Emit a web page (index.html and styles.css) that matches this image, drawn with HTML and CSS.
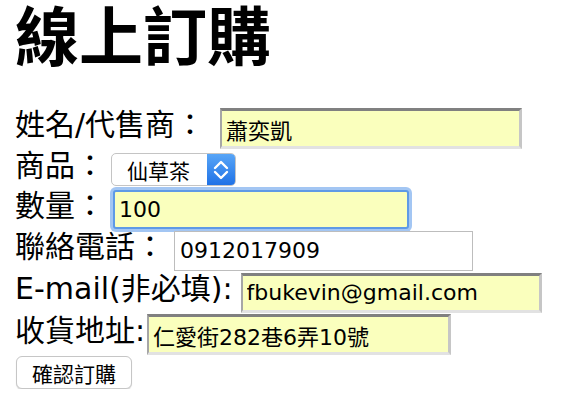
FILE: index.html
```html
<!DOCTYPE html>
<html lang="zh-Hant">
<head>
<meta charset="utf-8">
<title>線上訂購</title>
<link rel="stylesheet" href="styles.css">
</head>
<body>
<main class="page">
  <h1 class="title">線上訂購</h1>
  <form class="order">
    <div class="row row-name">
      <label class="lbl">姓名/代售商：</label>
      <input class="field inset f-name" type="text" value="蕭奕凱">
    </div>
    <div class="row row-product">
      <label class="lbl">商品：</label>
      <span class="select-wrap">
        <select class="select"><option>仙草茶</option></select>
        <span class="arrows">
          <svg width="28" height="33" viewBox="0 0 28 33"><polyline points="8,15 14,9 20,15" fill="none" stroke="#fff" stroke-width="2.4" stroke-linecap="round" stroke-linejoin="round"/><polyline points="8,19 14,25 20,19" fill="none" stroke="#fff" stroke-width="2.4" stroke-linecap="round" stroke-linejoin="round"/></svg>
        </span>
      </span>
    </div>
    <div class="row row-qty">
      <label class="lbl">數量：</label>
      <input class="field focus f-qty" type="text" value="100">
    </div>
    <div class="row row-phone">
      <label class="lbl">聯絡電話：</label>
      <input class="field plain f-phone" type="text" value="0912017909">
    </div>
    <div class="row row-mail">
      <label class="lbl">E-mail(非必填):</label>
      <input class="field inset f-mail" type="text" value="fbukevin@gmail.com">
    </div>
    <div class="row row-addr">
      <label class="lbl">收貨地址:</label>
      <input class="field inset f-addr" type="text" value="仁愛街282巷6弄10號">
    </div>
    <button class="submit" type="button">確認訂購</button>
  </form>
</main>
</body>
</html>
```

FILE: styles.css
```css
html, body {
  margin: 0;
  padding: 0;
  background: #fff;
}

.page {
  padding: 0 15px;
  font-family: "DejaVu Sans", "Noto Sans CJK TC", sans-serif;
  color: #000;
}

.title {
  margin: 0 0 42px 0;
  font-family: "Noto Sans CJK TC", sans-serif;
  font-size: 64px;
  font-weight: 700;
  line-height: 64px;
}

.order {
  display: flex;
  flex-direction: column;
  align-items: flex-start;
}

.row {
  display: flex;
  align-items: center;
}

.row-name { height: 45px; }
.row-product { height: 37px; }
.row-qty { height: 42px; }
.row-phone { height: 41px; }
.row-mail { height: 43px; }
.row-addr { height: 41px; }

.lbl {
  font-size: 30px;
  line-height: 30px;
  margin-bottom: 7px;
  white-space: nowrap;
}

.field {
  box-sizing: border-box;
  font-family: "DejaVu Sans", "Noto Sans CJK TC", sans-serif;
  font-size: 22px;
  color: #000;
  padding: 0 4px;
  margin: 0;
  outline: none;
}

.inset {
  background: #faffbd;
  border-style: solid;
  border-width: 3px 3px 3px 2px;
  border-color: #808080 #c6c6c6 #e2e2e2 #a6a6a6;
}

.f-name { width: 302px; height: 41px; margin-left: 15px; }
.f-mail { width: 301px; height: 40px; margin-left: 8px; }
.f-addr { width: 304px; height: 41px; margin-left: 2px; }

.plain {
  background: #fff;
  border: 1px solid #bdbdbd;
  padding-left: 5px;
}

.f-phone { width: 299px; height: 40px; margin-left: 9px; }

.focus {
  background: #faffbd;
  border: 2px solid #5e9ae6;
  border-radius: 3px;
  box-shadow: 0 0 0 3px #a3c6f3;
}

.f-qty { width: 296px; height: 39px; margin-left: 8px; }

.select-wrap {
  position: relative;
  box-sizing: border-box;
  display: block;
  width: 125px;
  height: 33px;
  margin-left: 6px;
  border: 1px solid #c4c4c4;
  border-radius: 5px;
  background: #fff;
  overflow: hidden;
}

.select {
  appearance: none;
  -webkit-appearance: none;
  display: block;
  width: 100%;
  height: 100%;
  margin: 0;
  padding: 0 0 0 15px;
  border: none;
  background: transparent;
  font-family: "Noto Sans CJK TC", sans-serif;
  font-size: 21px;
  color: #000;
  outline: none;
}

.arrows {
  position: absolute;
  top: -1px;
  right: -1px;
  width: 29px;
  height: 33px;
  background: linear-gradient(#5aa7f7, #1d70e6);
  border-radius: 0 5px 5px 0;
}

.arrows svg {
  display: block;
}

.submit {
  box-sizing: border-box;
  width: 116px;
  height: 33px;
  margin: 1px 0 0 1px;
  padding: 0;
  background: #fff;
  border: 1px solid #c6c6c6;
  border-radius: 6px;
  box-shadow: 0 1px 1px rgba(0, 0, 0, 0.15);
  font-family: "Noto Sans CJK TC", sans-serif;
  font-size: 21px;
  color: #000;
}
```
